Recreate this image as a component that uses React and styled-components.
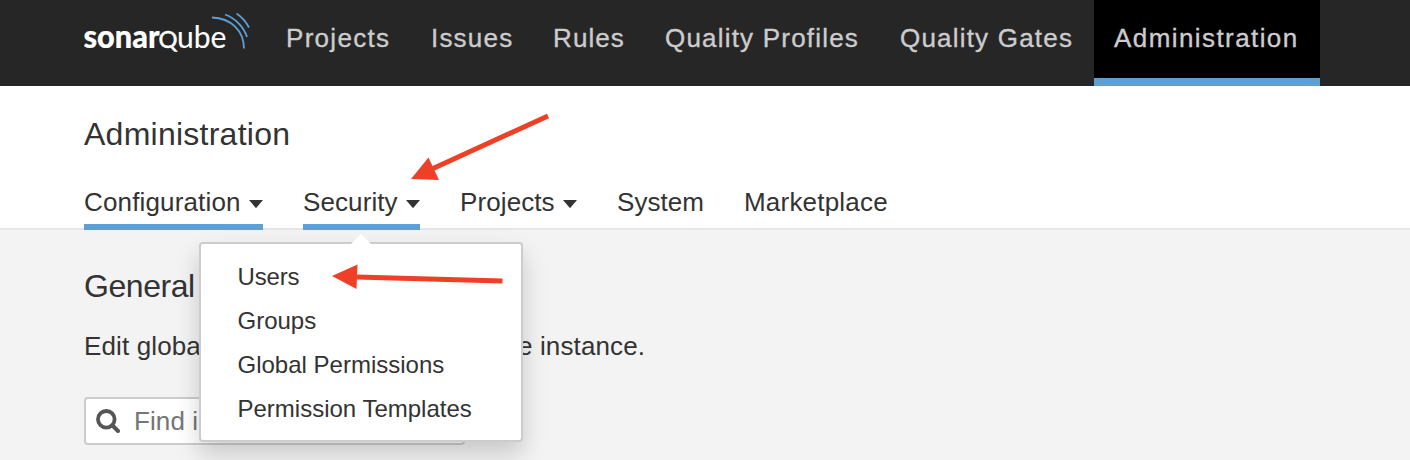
import React from "react";
import styled, { createGlobalStyle } from "styled-components";

const GlobalStyle = createGlobalStyle`
  * { box-sizing: border-box; }
  body {
    margin: 0;
    height: 460px;
    overflow: hidden;
    background: #f3f3f3;
    color: #333;
    font-family: "Liberation Sans", Arial, sans-serif;
    font-size: 26px;
  }
`;

const Page = styled.div`
  position: relative;
  height: 460px;
  overflow: hidden;
`;

const TopBar = styled.header`
  display: flex;
  height: 86px;
  padding-left: 84px;
  background: #262626;
`;

const Logo = styled.svg`
  width: 170px;
  height: 60px;
  margin-right: 12px;
`;

const TopNav = styled.nav`
  display: flex;
`;

const TopLink = styled.a`
  width: ${(p) => p.$width}px;
  padding: 23px 0 0 20px;
  height: 86px;
  line-height: 30px;
  white-space: nowrap;
  color: #ccc;
  -webkit-text-stroke: 0.35px #ccc;
  letter-spacing: ${(p) => p.$spacing}px;
  background: ${(p) => (p.$active ? "#000" : "transparent")};
  border-bottom: ${(p) => (p.$active ? "8px solid #5f9fd2" : "0")};
`;

const Context = styled.section`
  height: 144px;
  padding: 30px 84px 0;
  background: #fff;
  border-bottom: 2px solid #e6e6e6;
`;

const Title = styled.h1`
  margin: 0;
  font-size: 32px;
  font-weight: 400;
  line-height: 36px;
  letter-spacing: 0.25px;
`;

const Tabs = styled.nav`
  display: flex;
  gap: 40px;
  margin-top: 35px;
`;

const Tab = styled.a`
  position: relative;
  display: flex;
  align-items: flex-start;
  justify-content: space-between;
  width: ${(p) => p.$width}px;
  height: 43px;
  line-height: 30px;
  white-space: nowrap;
  letter-spacing: ${(p) => p.$spacing}px;
  border-bottom: ${(p) => (p.$active ? "6px solid #5f9fd2" : "0")};
`;

const Caret = styled.svg`
  flex: none;
  width: 14px;
  height: 8px;
  margin-top: 13px;
`;

const Content = styled.main`
  padding: 38px 84px 0;
`;

const Heading = styled.h2`
  margin: 0;
  font-size: 32px;
  font-weight: 400;
  line-height: 36px;
  letter-spacing: -0.45px;
`;

const Description = styled.p`
  margin: 27px 0 0;
  line-height: 30px;
  white-space: nowrap;
  letter-spacing: 0.125px;
`;

const Search = styled.div`
  display: flex;
  align-items: center;
  gap: 14px;
  width: 381px;
  height: 48px;
  margin-top: 36px;
  padding-left: 10px;
  background: #fff;
  border: 2px solid #ccc;
  border-radius: 4px;
  color: #757575;
  letter-spacing: 0.1px;
`;

const SearchIcon = styled.svg`
  width: 24px;
  height: 24px;
`;

const Menu = styled.div`
  position: absolute;
  left: 199px;
  top: 242px;
  width: 324px;
  height: 200px;
  padding: 11px 0 0 36.5px;
  background: #fff;
  border: 2px solid #ccc;
  border-radius: 4px;
  box-shadow: 0 12px 24px rgba(0, 0, 0, 0.175);
`;

const MenuArrow = styled.svg`
  position: absolute;
  left: 148px;
  top: -11px;
  width: 24px;
  height: 13px;
`;

const MenuItem = styled.a`
  display: block;
  height: 44px;
  line-height: 44px;
  font-size: 24px;
  white-space: nowrap;
  letter-spacing: ${(p) => p.$spacing}px;
`;

const Annotations = styled.svg`
  position: absolute;
  left: 0;
  top: 0;
  width: 1410px;
  height: 460px;
  pointer-events: none;
`;

const topLinks = [
  { label: "Projects", width: 145, spacing: 1.3 },
  { label: "Issues", width: 122, spacing: 1.2 },
  { label: "Rules", width: 112, spacing: 1.1 },
  { label: "Quality Profiles", width: 235, spacing: 1.2 },
  { label: "Quality Gates", width: 214, spacing: 1.2 },
  { label: "Administration", width: 226, spacing: 1.42, active: true },
];

const tabs = [
  { label: "Configuration", width: 179, spacing: 0.15, active: true, caret: true },
  { label: "Security", width: 117, spacing: 0.1, active: true, caret: true },
  { label: "Projects", width: 117, spacing: 0.1, caret: true },
  { label: "System", width: 87, spacing: 0.05 },
  { label: "Marketplace", width: 146, spacing: 0.2 },
];

const menuItems = [
  { label: "Users", spacing: -0.15 },
  { label: "Groups", spacing: 0 },
  { label: "Global Permissions", spacing: 0 },
  { label: "Permission Templates", spacing: 0 },
];

export default function App() {
  return (
    <Page>
      <GlobalStyle />
      <TopBar>
        <Logo viewBox="0 0 170 60">
          <g fill="#fff" stroke="#fff" fontFamily="Lato, sans-serif" fontSize="31.5">
            <text x="-0.500" y="48" fontWeight="900" strokeWidth="0.200" textLength="76" lengthAdjust="spacingAndGlyphs">sonar</text>
            <text x="74.500" y="48" fontSize="22.500" strokeWidth="0.500" textLength="19" lengthAdjust="spacingAndGlyphs">Q</text>
            <text x="93" y="48" strokeWidth="0.100" textLength="49.500" lengthAdjust="spacingAndGlyphs">ube</text>
          </g>
          <g fill="none" stroke="#5f9fd2" strokeWidth="1.8">
            <path d="M128 17.500C147 18 160 31 160 48.500" />
            <path d="M141 14.500C151 18 160 27 163 37" />
            <path d="M152.500 13.500C158 17 162 22 165 27.500" />
          </g>
        </Logo>
        <TopNav>
          {topLinks.map((l) => (
            <TopLink key={l.label} $width={l.width} $spacing={l.spacing} $active={l.active}>
              {l.label}
            </TopLink>
          ))}
        </TopNav>
      </TopBar>
      <Context>
        <Title>Administration</Title>
        <Tabs>
          {tabs.map((t) => (
            <Tab key={t.label} $width={t.width} $spacing={t.spacing} $active={t.active}>
              {t.label}
              {t.caret && (
                <Caret viewBox="0 0 14 8">
                  <path d="M0 0H14L7.600 7.600Q7 8.200 6.400 7.600Z" fill="#333" />
                </Caret>
              )}
            </Tab>
          ))}
        </Tabs>
      </Context>
      <Content>
        <Heading>General Settings</Heading>
        <Description>Edit global settings for this SonarQube instance.</Description>
        <Search>
          <SearchIcon viewBox="0 0 24 24">
            <circle cx="10.300" cy="10.300" r="8.300" fill="none" stroke="#555" strokeWidth="3.800" />
            <path d="M16.500 16.500L22 22" stroke="#555" strokeWidth="4" strokeLinecap="round" />
          </SearchIcon>
          <span>Find in Settings</span>
        </Search>
      </Content>
      <Menu>
        <MenuArrow viewBox="0 0 24 13">
          <path d="M0 13L12 1L24 13Z" fill="#fff" />
        </MenuArrow>
        {menuItems.map((m) => (
          <MenuItem key={m.label} $spacing={m.spacing}>
            {m.label}
          </MenuItem>
        ))}
      </Menu>
      <Annotations viewBox="0 0 1410 460">
        <g fill="#ed4027" stroke="#ed4027">
          <path d="M548 116L432 169" strokeWidth="5" />
          <path d="M411 179L428.500 157.500L439 180Z" stroke="none" />
          <path d="M502.500 281L356 277" strokeWidth="5" />
          <path d="M332 276L357.500 264.500L356.500 289Z" stroke="none" />
        </g>
      </Annotations>
    </Page>
  );
}
